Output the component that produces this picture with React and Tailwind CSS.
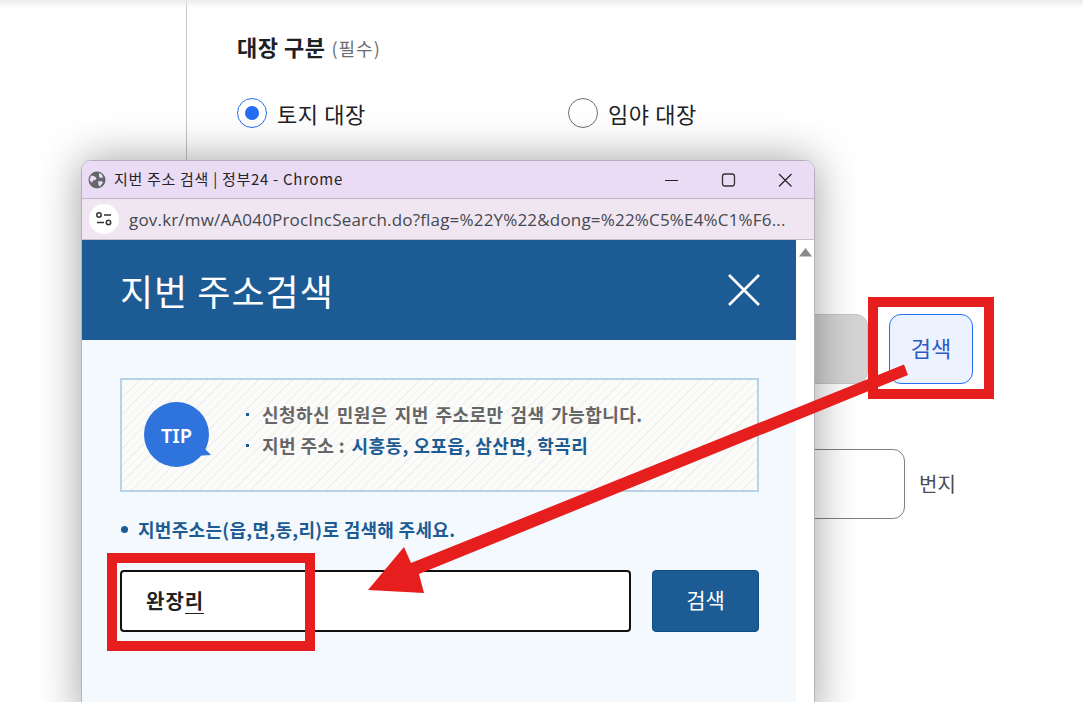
import React from "react";

const kr = "font-['Noto_Sans_CJK_KR','Noto_Sans',sans-serif]";

function Background() {
  return (
    <div className="pl-[186px] h-full">
      <div className="h-full border-l border-[#c4c4c4] pl-[50px] pt-[30px]">
        <div className="flex items-baseline gap-[6px] h-[32px]">
          <span className="text-[22px] leading-[32px] font-bold text-[#1e2124] tracking-[0.5px]">대장 구분</span>
          <span className="text-[18px] leading-[32px] text-[#6b6f75] tracking-[1px]">(필수)</span>
        </div>
        <div className="flex mt-[35px] h-[32px]">
          <label className="flex items-center gap-[10px] w-[331px]">
            <span className="w-[30px] h-[30px] rounded-full border border-[#256ef4] flex items-center justify-center">
              <span className="w-[14px] h-[14px] rounded-full bg-[#256ef4]" />
            </span>
            <span className="text-[22px] text-[#1e2124] tracking-[0.6px]">토지 대장</span>
          </label>
          <label className="flex items-center gap-[10px]">
            <span className="w-[30px] h-[30px] rounded-full border border-[#6b6f75] bg-white" />
            <span className="text-[22px] text-[#1e2124] tracking-[0.6px]">임야 대장</span>
          </label>
        </div>
        <div className="flex gap-[21px] mt-[185px] h-[70px] w-[736px]">
          <div className="w-[631px] rounded-[12px] bg-[#d4d4d4] border border-[#c6c6c6]" />
          <button className="w-[84px] rounded-[12px] border border-[#256ef4] bg-[#ecf2fe] text-[#2a5cc5] text-[22px] pb-[3px]">검색</button>
        </div>
        <div className="flex items-center gap-[14px] mt-[65px] h-[70px]">
          <div className="w-[668px] h-[70px] rounded-[12px] border border-[#808080] bg-white" />
          <span className="text-[20px] text-[#464c53]">번지</span>
        </div>
      </div>
    </div>
  );
}

function Popup() {
  return (
    <div className="absolute left-[81px] top-[160px] w-[734px] h-[560px] rounded-t-[10px] border border-[#b7b0bd] bg-white shadow-[0_0_44px_rgba(0,0,0,0.38)] overflow-hidden flex flex-col">
      <div className="h-[38px] shrink-0 bg-[#ebdcf6] border-b border-[#bfb4c8] flex items-center pl-[6px]">
        <svg width="18" height="18" viewBox="0 0 18 18" className="shrink-0">
          <circle cx="9" cy="9" r="8.5" fill="#63666a" />
          <path d="M3 4.500l3 .5 2.500 2-1 2-2.500.5-1 2.500-2.500-3zM11 2l3 1.500 1 3-2.500.5-1.500-1.500zM10 10.500l3.500-.5 1.500 1.500-3 4-1.500-1.500z" fill="#ebdcf6" />
        </svg>
        <span className="ml-[8px] text-[15px] text-[#242424] tracking-[0.7px] whitespace-nowrap">지번 주소 검색 | 정부24 - Chrome</span>
        <div className="ml-auto flex items-center text-[#222]">
          <svg width="58" height="18" viewBox="0 0 58 18"><path d="M15 9.500h13" stroke="#222" strokeWidth="1.200" /></svg>
          <svg width="65" height="18" viewBox="0 0 65 18"><rect x="14.500" y="3" width="12" height="12" rx="2.500" fill="none" stroke="#333" strokeWidth="1.300" /></svg>
          <svg width="41" height="18" viewBox="0 0 41 18"><path d="M6 3l12.500 12.500M18.500 3L6 15.500" stroke="#222" strokeWidth="1.200" /></svg>
        </div>
      </div>
      <div className="h-[41px] shrink-0 bg-[#efe6f2] border-b border-[#c6bdcb] flex items-center pl-[7px]">
        <span className="w-[30px] h-[30px] rounded-full bg-white flex items-center justify-center shrink-0">
          <svg width="18" height="16" viewBox="0 0 18 16" fill="none" stroke="#333" strokeWidth="1.500">
            <circle cx="4" cy="4" r="2.200" /><path d="M9 4h7M2 11.500h7" /><circle cx="13.500" cy="11.500" r="2.200" />
          </svg>
        </span>
        <span className="ml-[10px] mt-[1px] w-[662px] text-[17px] text-[#45494e] whitespace-nowrap overflow-hidden font-['Open_Sans',sans-serif] tracking-[0.18px]">gov.kr/mw/AA040ProcIncSearch.do?flag=%22Y%22&amp;dong=%22%C5%E4%C1%F6...</span>
      </div>
      <div className="flex flex-1 min-h-0">
        <div className="w-[714px] bg-[#f4f9fe]">
          <div className="h-[100px] bg-[#1c5b93] flex items-center justify-between pl-[38px] pr-[36px]">
            <span className="text-[36px] text-white tracking-[1px]">지번 주소검색</span>
            <svg width="32" height="32" viewBox="0 0 32 32"><path d="M1 1l30 30M31 1L1 31" stroke="#fff" strokeWidth="2.600" /></svg>
          </div>
          <div className="pt-[38px] pl-[38px] pr-[37px]">
            <div className="h-[114px] border-2 border-[#b8d2e8] flex items-center pl-[22px] bg-[repeating-linear-gradient(135deg,#f0f0ee_0px,#f0f0ee_1px,#fbfbfa_1px,#fbfbfa_6px)]">
              <svg width="68" height="66" viewBox="0 0 68 66" className="shrink-0">
                <circle cx="32.500" cy="32.500" r="32.500" fill="#2f74dc" />
                <path d="M58 44l9 9-16 1z" fill="#2f74dc" />
                <text x="32.500" y="41" textAnchor="middle" fill="#fff" fontSize="20" fontWeight="600" fontFamily="'Noto Sans',sans-serif">TIP</text>
              </svg>
              <div className="ml-[34px] mb-[10px] text-[18px] leading-[31px] font-bold text-[#666666] tracking-[0.4px]">
                <div className="flex items-center whitespace-nowrap [word-spacing:2.5px]"><span className="w-[3px] h-[3px] bg-[#1c5b93] mr-[13px]" />신청하신 민원은 지번 주소로만 검색 가능합니다.</div>
                <div className="flex items-center whitespace-nowrap"><span className="w-[3px] h-[3px] bg-[#1c5b93] mr-[13px]" />지번 주소 :&nbsp;<span className="ml-[2px] text-[#1c5b93] font-bold tracking-[0.45px]">시흥동, 오포읍, 삼산면, 학곡리</span></div>
              </div>
            </div>
            <div className="mt-[24px] flex items-center h-[26px] text-[18px] font-bold text-[#1c5b93] tracking-[0.3px] whitespace-nowrap">
              <span className="w-[7px] h-[7px] rounded-full bg-[#1c5b93] ml-[1px] mr-[10px]" />지번주소는(읍,면,동,리)로 검색해 주세요.
            </div>
            <div className="mt-[28px] flex gap-[21px] h-[62px]">
              <div className="w-[511px] border-2 border-[#111] rounded-[4px] bg-white flex items-center pl-[24px] text-[20px] font-bold text-[#222] tracking-[1px]">
                완장<span className="border-b border-[#222] leading-[25px]">리</span>
              </div>
              <button className="w-[107px] bg-[#1c5b93] border border-[#0f4c85] rounded-[4px] text-white text-[21px] pb-[2px]">검색</button>
            </div>
          </div>
        </div>
        <div className="flex-1 bg-white flex justify-center pt-[8px]">
          <svg width="13" height="9" viewBox="0 0 13 9"><path d="M6.500 0l6.500 8.500H0z" fill="#8a8a8a" /></svg>
        </div>
      </div>
    </div>
  );
}

function Annotations() {
  return (
    <>
      <div className="absolute left-[868px] top-[297px] w-[126px] h-[102px] border-[10px] border-[#e61e1e]" />
      <div className="absolute left-[107px] top-[553px] w-[208px] h-[98px] border-[10px] border-[#e61e1e]" />
      <svg className="absolute left-0 top-0" width="1083" height="702" viewBox="0 0 1083 702">
        <path d="M904 364.500L908 375 419 574 424 593 368 590 404 547 411 563z" fill="#e61e1e" />
      </svg>
    </>
  );
}

export default function App() {
  return (
    <div className={`relative w-[1083px] h-[702px] overflow-hidden bg-white ${kr}`}>
      <Background />
      <div className="absolute inset-x-0 top-0 h-[8px] bg-gradient-to-b from-[#ececec] to-transparent" />
      <Popup />
      <Annotations />
    </div>
  );
}
